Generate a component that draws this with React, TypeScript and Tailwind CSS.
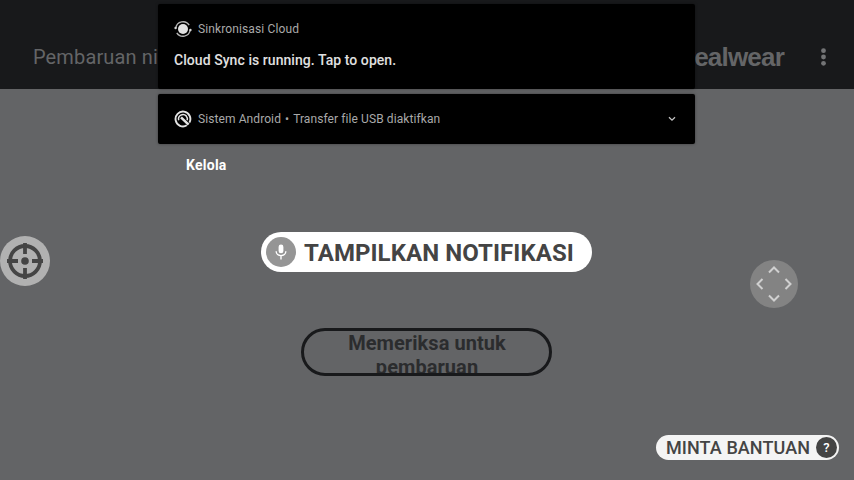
import React from "react";

function SyncIcon() {
  return (
    <svg width="18" height="18" viewBox="0 0 18 18" fill="none">
      <circle cx="9" cy="9" r="5" fill="#e2e2e2" />
      <path d="M1.8 8A7.3 7.3 0 0 1 15.2 5.2M16.2 10A7.3 7.3 0 0 1 2.8 12.8" stroke="#b4b4b4" strokeWidth="1.4" />
      <circle cx="1.6" cy="8" r="1.2" fill="#d4d4d4" />
      <circle cx="16.4" cy="10" r="1.2" fill="#d4d4d4" />
    </svg>
  );
}

function SystemIcon() {
  return (
    <svg width="18" height="18" viewBox="0 0 18 18" fill="none" stroke="#e4e4e4">
      <path d="M12.8 15.3A7.4 7.4 0 1 1 15.4 12.6" strokeWidth="1.9" />
      <path d="M4.7 10.3A4.5 4.5 0 0 1 12.2 5.9A4.5 4.5 0 0 1 13.2 10.2" strokeWidth="1.5" />
      <path d="M7 7.4L14.6 14.6" strokeWidth="2.6" />
    </svg>
  );
}

function Crosshair() {
  return (
    <svg width="50" height="50" viewBox="0 0 50 50" fill="none" stroke="#454545">
      <circle cx="25" cy="25" r="15" strokeWidth="3.8" />
      <path d="M25 7v11M25 32v11M7 25h11M32 25h11" strokeWidth="3.8" />
      <circle cx="25" cy="25" r="3.8" fill="#454545" stroke="none" />
    </svg>
  );
}

function AppScreen() {
  return (
    <div className="flex h-full flex-col bg-[#636466]">
      <header className="flex h-[89px] items-center bg-[#18191b] pt-6 pr-[26px] pl-[33px] text-[#646567]">
        <h1 className="text-[20px] leading-6 tracking-[0.13px] whitespace-nowrap">Pembaruan nirkabel</h1>
        <div className="ml-auto font-['Liberation_Sans'] text-[26px] leading-7 font-bold tracking-[-0.8px]">realwear</div>
        <svg className="ml-[35px]" width="9" height="20" viewBox="0 0 9 20" fill="#737476">
          <circle cx="4.5" cy="3.7" r="2.4" />
          <circle cx="4.5" cy="10" r="2.4" />
          <circle cx="4.5" cy="16.3" r="2.4" />
        </svg>
      </header>
      <main className="flex flex-1 justify-center pt-[239px] pr-[2px]">
        <button className="h-12 w-[251px] overflow-hidden rounded-full border-[3px] border-[#18191b] pr-[31px] pl-[33px] text-[20px] leading-6 font-bold tracking-[0.06px] text-[#2b2c2e]">
          Memeriksa untuk pembaruan
        </button>
      </main>
    </div>
  );
}

function NotificationShade() {
  return (
    <div className="absolute inset-0 flex flex-col items-start pt-1 pl-[158px]">
      <section className="h-[85px] w-[537px] rounded-[2px] bg-black px-4 pt-4 shadow-[0_0_3px_rgba(0,0,0,0.4)]">
        <div className="flex h-[18px] items-center gap-1.5 text-[12px] text-[#a9a9a9]">
          <SyncIcon />
          <span className="tracking-[0.12px]">Sinkronisasi Cloud</span>
        </div>
        <p className="mt-[12px] text-[14px] leading-5 font-medium tracking-[0.06px] text-[#e0e0e0]">Cloud Sync is running. Tap to open.</p>
      </section>
      <section className="mt-[5px] flex h-[50px] w-[537px] items-center gap-1.5 rounded-[2px] bg-black px-4 text-[12px] text-[#a9a9a9] shadow-[0_0_3px_rgba(0,0,0,0.4)]">
        <SystemIcon />
        <div className="flex gap-1 tracking-[0.09px]">
          <span>Sistem Android</span>
          <span>•</span>
          <span>Transfer file USB diaktifkan</span>
        </div>
        <svg className="mr-[3px] ml-auto" width="8" height="6" viewBox="0 0 8 6" fill="none" stroke="#c4c4c4" strokeWidth="1.3">
          <path d="M1 1.2l3 3 3-3" />
        </svg>
      </section>
      <button className="mt-[11px] ml-[28px] text-[14px] leading-5 font-bold tracking-[0.25px] text-white">Kelola</button>
    </div>
  );
}

export default function App() {
  return (
    <div className="relative h-[480px] w-[854px] overflow-hidden font-[Roboto,sans-serif]">
      <AppScreen />
      <NotificationShade />
      <div className="absolute top-[236px] left-0 size-[50px] rounded-full bg-[#b1b1b1]">
        <Crosshair />
      </div>
      <div className="absolute top-[232px] left-[261px] flex h-10 w-[331px] items-center gap-2 rounded-full bg-white pl-[5px]">
        <span className="flex size-[30px] items-center justify-center rounded-full bg-[#959595]">
          <svg width="12" height="16" viewBox="0 0 12 16" fill="none" stroke="#fff" strokeWidth="1.4">
            <rect x="3.6" y="0.5" width="4.8" height="8.8" rx="2.4" fill="#fff" stroke="none" />
            <path d="M1.2 7.2v.4a4.8 4 0 0 0 9.600 0v-.4M6 12v3.4" />
          </svg>
        </span>
        <span className="pt-[2px] text-[24px] leading-7 font-bold tracking-[0.07px] whitespace-nowrap text-[#444]">TAMPILKAN NOTIFIKASI</span>
      </div>
      <div className="absolute top-[260px] left-[750px] size-12 rounded-full bg-[#838383]">
        <svg width="48" height="48" viewBox="0 0 48 48" fill="none" stroke="#d0d0d0" strokeWidth="2">
          <path d="M19 12.5l5-5 5 5M19 35.5l5 5 5-5M12.5 19l-5 5 5 5M35.5 19l5 5-5 5" />
        </svg>
      </div>
      <div className="absolute top-[435px] left-[656px] flex h-[25px] w-[183px] items-center rounded-full bg-[#f4f4f4] pr-[2px] pl-[10px] text-[#444]">
        <span className="text-[18px] leading-6 font-medium tracking-[0.08px] whitespace-nowrap">MINTA BANTUAN</span>
        <span className="ml-auto flex size-[21px] items-center justify-center rounded-full bg-[#444] text-[13px] font-medium text-white">?</span>
      </div>
    </div>
  );
}
